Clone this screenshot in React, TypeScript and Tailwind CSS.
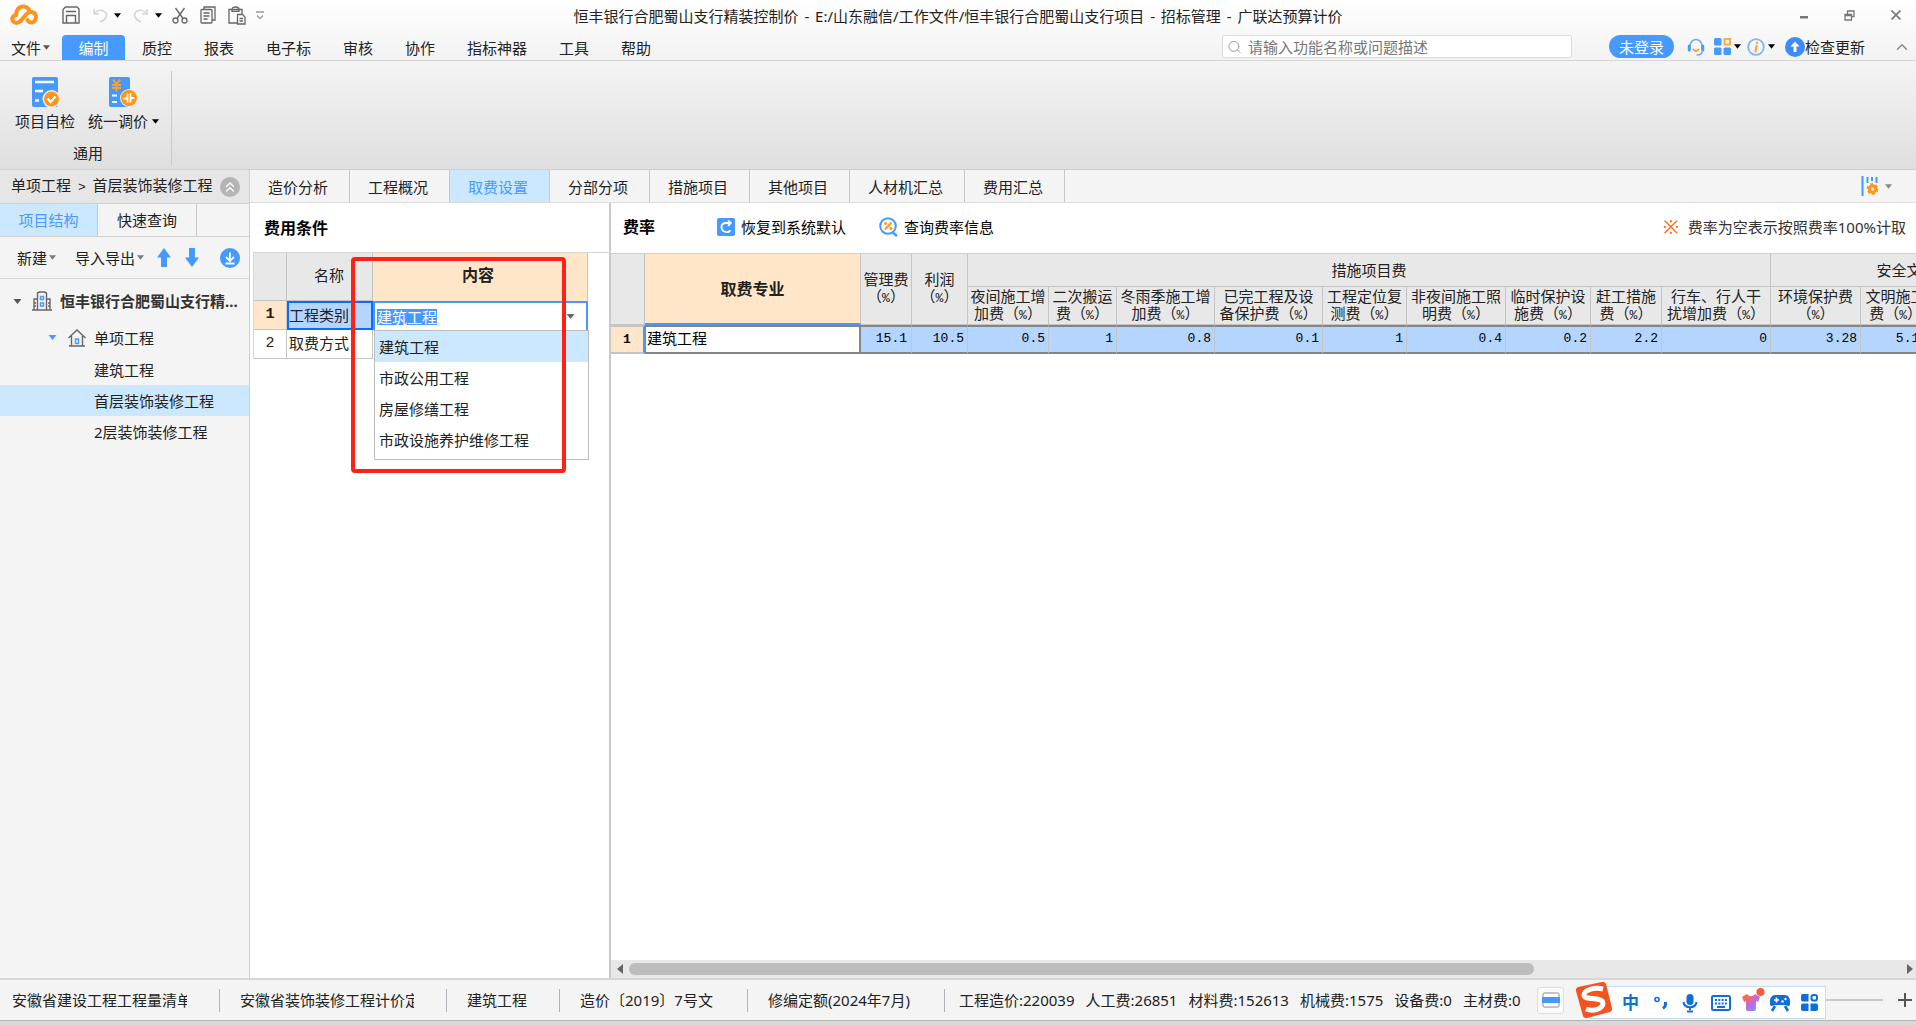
import React, { useEffect, useRef } from 'react';
import { ChevronUp, ChevronsUp, Search } from 'lucide-react';

const menus = ['质控', '报表', '电子标', '审核', '协作', '指标神器', '工具', '帮助'];

const mainTabs = ['造价分析', '工程概况', '取费设置', '分部分项', '措施项目', '其他项目', '人材机汇总', '费用汇总'];

const options = ['建筑工程', '市政公用工程', '房屋修缮工程', '市政设施养护维修工程'];

const measureCols = [
  { lines: ['夜间施工增', '加费'], value: '0.5' },
  { lines: ['二次搬运', '费'], value: '1' },
  { lines: ['冬雨季施工增', '加费'], value: '0.8' },
  { lines: ['已完工程及设', '备保护费'], value: '0.1' },
  { lines: ['工程定位复', '测费'], value: '1' },
  { lines: ['非夜间施工照', '明费'], value: '0.4' },
  { lines: ['临时保护设', '施费'], value: '0.2' },
  { lines: ['赶工措施', '费'], value: '2.2' },
  { lines: ['行车、行人干', '扰增加费'], value: '0' },
  { lines: ['环境保护费', ''], value: '3.28' },
  { lines: ['文明施工', '费'], value: '5.12' },
];

const totals = ['工程造价:220039', '人工费:26851', '材料费:152613', '机械费:1575', '设备费:0', '主材费:0'];

const Caret: React.FC<{ className?: string }> = ({ className = 'text-black' }) => (
  <svg viewBox="0 0 8 5" className={`h-[5px] w-[7px] shrink-0 ${className}`} fill="currentColor" aria-hidden="true">
    <path d="M0 0h8L4 5z" />
  </svg>
);

const Percent = () => (
  <>
    （<span className="font-['Liberation_Mono',monospace] text-[13px]">%</span>）
  </>
);

const Dash = () => <span className="mx-[2px]">-</span>;

const Logo = () => (
  <svg viewBox="0 0 28 22" className="h-[22px] w-7" fill="none" stroke="#ff9418" strokeWidth="4" strokeLinecap="round" strokeLinejoin="round">
    <path d="M10.500 17c-2 2.300-5.500 2.500-7.200.5-2-2.500-1-6 3-6.500C6 6 9 2.500 13 2.500c3 0 5.300 1.500 6.300 4" />
    <path d="M10.500 17 16.500 10c3-3.300 8.500-2.500 9.300 2 .6 4-2 7-5 6.500-1.800-.3-2.800-1.200-3.300-2.500" />
  </svg>
);

const TitleBar = () => (
  <div className="grid h-[30px] grid-cols-[1fr_auto_1fr] items-center">
    <div className="flex items-center pl-[10px] text-[#666]">
      <Logo />
      <button aria-label="保存" className="ml-6">
        <svg viewBox="0 0 18 18" className="h-[18px] w-[18px]" fill="none" stroke="currentColor" strokeWidth="1.400">
          <path d="M1 17V3.500L3.500 1H15l2 2v14zM4.500 17V9.500h9V17M4 5.500h10" />
        </svg>
      </button>
      <button aria-label="撤销" className="ml-3 text-[#d4d4d4]">
        <svg viewBox="0 0 16 16" className="h-4 w-4" fill="none" stroke="currentColor" strokeWidth="1.500">
          <path d="M2 2v5h5M2 7c3-4 8-5 11-2s1 8-5 10" />
        </svg>
      </button>
      <button aria-label="撤销列表" className="ml-[6px]"><Caret /></button>
      <button aria-label="恢复" className="ml-3 text-[#d4d4d4]">
        <svg viewBox="0 0 16 16" className="h-4 w-4" fill="none" stroke="currentColor" strokeWidth="1.500">
          <path d="M14 2v5H9M14 7C11 3 6 2 3 5s-1 8 5 10" />
        </svg>
      </button>
      <button aria-label="恢复列表" className="ml-[6px]"><Caret /></button>
      <button aria-label="剪切" className="ml-[10px]">
        <svg viewBox="0 0 16 17" className="h-[17px] w-4" fill="none" stroke="currentColor" strokeWidth="1.300">
          <circle cx="3.500" cy="13.500" r="2.500" />
          <circle cx="12.500" cy="13.500" r="2.500" />
          <path d="M5 11.500 12.500 1M11 11.500 3.500 1" />
        </svg>
      </button>
      <button aria-label="复制" className="ml-3">
        <svg viewBox="0 0 16 18" className="h-[18px] w-4" fill="none" stroke="currentColor" strokeWidth="1.300">
          <path d="M4 3.500V1h11v13h-3" />
          <rect x="1" y="3.500" width="11" height="13.500" rx="1" />
          <path d="M3.500 7h6M3.500 10h6M3.500 13h4" />
        </svg>
      </button>
      <button aria-label="粘贴" className="ml-3">
        <svg viewBox="0 0 18 19" className="h-[19px] w-[18px]" fill="none" stroke="currentColor" strokeWidth="1.300">
          <path d="M9 17H1V3.500h13V8M4 3.500C4 1.500 5.500 1 7.500 1S11 1.500 11 3.500v1.800H4z" />
          <path d="M9.500 8.500h5l2.500 2.500v7H9.500zM11.500 12.500h3.500M11.500 15h3.500" />
        </svg>
      </button>
      <button aria-label="自定义工具栏" className="ml-[10px] text-[#999]">
        <svg viewBox="0 0 8 9" className="h-[9px] w-2" fill="none" stroke="currentColor" strokeWidth="1.300">
          <path d="M0 1h8M1 4.500 4 7.500 7 4.500" />
        </svg>
      </button>
    </div>
    <h1 className="truncate pt-[2px] text-[15px]">
      恒丰银行合肥蜀山支行精装控制价 <Dash /> E:/山东融信/工作文件/恒丰银行合肥蜀山支行项目 <Dash /> 招标管理 <Dash /> 广联达预算计价
    </h1>
    <div className="flex items-center justify-end gap-9 pr-[15px] text-[#777]">
      <button aria-label="最小化">
        <svg viewBox="0 0 8 10" className="h-[10px] w-2" fill="currentColor"><path d="M0 6h8v2.500H0z" /></svg>
      </button>
      <button aria-label="还原">
        <svg viewBox="0 0 11 11" className="h-[11px] w-[11px]" fill="none" stroke="currentColor" strokeWidth="1.300">
          <path d="M1 4.500h6.500v5.500H1zM3.500 4.500V1H10v5.500H7.500M1 5.500h6.500" />
        </svg>
      </button>
      <button aria-label="关闭">
        <svg viewBox="0 0 10 10" className="h-[10px] w-[10px]" fill="none" stroke="currentColor" strokeWidth="1.600">
          <path d="m.5.5 9 9M9.500.5l-9 9" />
        </svg>
      </button>
    </div>
  </div>
);

const MenuBar = () => (
  <nav className="flex h-[31px] items-end border-b border-[#d6d6d6]">
    <div className="flex h-[25px] items-stretch">
      <button className="flex w-[62px] items-center gap-[2px] pl-[11px]">
        文件<Caret className="text-[#555]" />
      </button>
      <button className="mr-px w-[63px] rounded-t-[4px] bg-[#4599ff] text-white">编制</button>
      {menus.map((m) => (
        <button key={m} className="px-4">{m}</button>
      ))}
    </div>
    <div className="mb-[2px] ml-auto flex items-center pr-[5px]">
      <label className="flex h-[23px] w-[350px] items-center gap-[6px] rounded-[3px] border border-[#dcdcdc] bg-white pl-1">
        <Search className="h-4 w-4 text-[#999]" strokeWidth={1.5} />
        <input
          type="text"
          aria-label="搜索功能"
          placeholder="请输入功能名称或问题描述"
          className="w-full bg-transparent outline-none placeholder:text-[#777]"
        />
      </label>
      <button className="ml-[37px] h-[23px] w-[65px] rounded-full bg-[#4599ff] text-white">未登录</button>
      <button aria-label="客服" className="ml-[13px]">
        <svg viewBox="0 0 18 18" className="h-[18px] w-[18px]" fill="none" strokeLinecap="round">
          <path d="M3 8a6 6.500 0 0 1 12 0" stroke="#6db0ff" strokeWidth="1.600" />
          <path d="M2.300 8v4M15.700 8v4" stroke="#4599ff" strokeWidth="3" />
          <path d="M15.500 13c-.5 2.500-2.500 4-5.500 4" stroke="#6db0ff" strokeWidth="1.400" />
          <path d="M6.500 11.500c1.500 2 3.500 2 5 0" stroke="#ff9f2e" strokeWidth="2" />
        </svg>
      </button>
      <button className="ml-[9px] flex items-center gap-[3px]" aria-label="应用">
        <svg viewBox="0 0 17 17" className="h-[17px] w-[17px]">
          <rect x="0" y="0" width="7.500" height="7.500" rx="1.500" fill="#4599ff" />
          <rect x="0" y="9.500" width="7.500" height="7.500" rx="1.500" fill="#4599ff" />
          <rect x="9.500" y="9.500" width="7.500" height="7.500" rx="1.500" fill="#4599ff" />
          <rect x="10.500" y="1" width="5.500" height="5.500" fill="none" stroke="#ffab45" strokeWidth="2" />
        </svg>
        <Caret />
      </button>
      <button className="ml-[6px] flex items-center gap-[3px]" aria-label="关于">
        <svg viewBox="0 0 18 18" className="h-[18px] w-[18px]" fill="none">
          <circle cx="9" cy="9" r="7.800" stroke="#7cb8ff" strokeWidth="1.800" />
          <path d="M9.500 8 8.500 13.500M10 4.500l-.1.800" stroke="#ff9f2e" strokeWidth="2" strokeLinecap="round" />
        </svg>
        <Caret />
      </button>
      <button className="ml-[10px] flex items-center">
        <svg viewBox="0 0 20 20" className="h-5 w-5">
          <circle cx="10" cy="10" r="10" fill="#3d8bff" />
          <path d="M10 4.500 5.500 9.500h3V15h3V9.500h3z" fill="#fff" />
        </svg>
        检查更新
      </button>
      <button aria-label="收起功能区" className="ml-[28px]">
        <ChevronUp className="h-[18px] w-[18px] text-[#8a8a8a]" />
      </button>
    </div>
  </nav>
);

const Ribbon = () => (
  <section className="flex h-[108px] items-start bg-linear-to-b from-[#f4f4f4] to-[#dfdfdf] pt-[10px]">
    <div className="flex h-[94px] w-[172px] flex-col items-center border-r border-[#c9c9c9]">
      <div className="flex w-full pt-[6px]">
        <button className="ml-[15px] flex flex-col gap-[3px]">
          <svg viewBox="0 0 28 31" className="ml-[17px] h-[31px] w-7">
            <rect width="26" height="30" rx="2" fill="#4599ff" />
            <path d="M3 5h19M3 14h8M3 23.500h4" stroke="#fff" strokeWidth="2.500" />
            <circle cx="19.500" cy="22" r="9" fill="#e9f1fb" />
            <circle cx="19.500" cy="22" r="7.500" fill="#ff9418" />
            <path d="m15.500 21.500 3 3.500 5-5.500" fill="none" stroke="#fff" strokeWidth="2.400" />
          </svg>
          <span className="leading-5">项目自检</span>
        </button>
        <button className="ml-[13px] flex flex-col gap-[3px]">
          <svg viewBox="0 0 29 31" className="ml-[21px] h-[31px] w-[29px]">
            <rect width="21" height="30" rx="2" fill="#4599ff" />
            <path d="m4 2.500 3.500 4.500L11 2.500M3 8h9M3 11h9M7.500 7v7.500" fill="none" stroke="#ff9f2e" strokeWidth="2" />
            <path d="M3 18.500h5M3 25h5" stroke="#fff" strokeWidth="2" />
            <circle cx="20" cy="21" r="9" fill="#e9f1fb" />
            <circle cx="20" cy="21" r="8" fill="#ff9418" />
            <path d="M14.500 21.500h4V17M18.500 16.500V26M21.500 16v9.500M21.500 21h4" fill="none" stroke="#fff" strokeWidth="1.800" />
          </svg>
          <span className="flex items-center gap-1 leading-5">统一调价<Caret /></span>
        </button>
      </div>
      <span className="mt-3 pl-[5px]">通用</span>
    </div>
  </section>
);

const Sidebar = () => (
  <aside className="flex w-[250px] shrink-0 flex-col border-r border-[#d0d0d0] bg-[#f4f4f4]">
    <div className="flex h-[33px] items-center justify-between bg-[#e6e6e6] pr-[9px] pl-[11px]">
      <span>
        单项工程 <span className="mx-[3px] font-['Liberation_Mono',monospace] text-[13px]">&gt;</span> 首层装饰装修工程
      </span>
      <button aria-label="折叠" className="flex h-5 w-5 items-center justify-center rounded-full bg-[#b5b5b5] text-white">
        <ChevronsUp className="h-4 w-4" />
      </button>
    </div>
    <div className="flex h-[34px] border-y border-[#d0d0d0]">
      <button className="w-[98px] border-r border-[#c8c8c8] bg-[#cce8ff] text-[#4599ff]">项目结构</button>
      <button className="w-[99px] border-r border-[#c8c8c8]">快速查询</button>
    </div>
    <div className="flex h-[42px] items-center border-b border-[#d6d6d6] pl-[17px]">
      <button className="flex items-center gap-[2px]">新建<Caret className="text-[#777]" /></button>
      <button className="ml-[19px] flex items-center gap-[2px]">导入导出<Caret className="text-[#777]" /></button>
      <button aria-label="上移" className="ml-[13px]">
        <svg viewBox="0 0 14 19" className="h-[19px] w-[14px]" fill="#4599ff"><path d="M7 0 0 9.500h4V19h6V9.500h4z" /></svg>
      </button>
      <button aria-label="下移" className="ml-[14px]">
        <svg viewBox="0 0 14 19" className="h-[19px] w-[14px]" fill="#4599ff"><path d="M7 19 0 9.500h4V0h6v9.500h4z" /></svg>
      </button>
      <button aria-label="下载" className="ml-[21px]">
        <svg viewBox="0 0 20 20" className="h-5 w-5" fill="none" stroke="#fff" strokeWidth="1.800">
          <circle cx="10" cy="10" r="10" fill="#4599ff" stroke="none" />
          <path d="M10 4.500v8M6 9l4 4 4-4M5.500 15.500h9" />
        </svg>
      </button>
    </div>
    <ul className="pt-[3px]">
      <li className="flex h-[38px] items-center pl-[13px] font-bold text-[#333]">
        <Caret className="w-[9px] text-[#555]" />
        <svg viewBox="0 0 20 20" className="mr-2 ml-[10px] h-5 w-5 shrink-0" fill="none" stroke="#666" strokeWidth="1.400">
          <path d="M5.500 19V2l2-1h5l2 1v17M5.500 8H2v11M14.500 8H18v11M0 19h20M2 12h2M2 15h2M16 12h2M16 15h2" />
          <path d="M8.500 5.500h3v3h-3zM8.500 12h3v3h-3z" stroke="#4599ff" />
        </svg>
        <span className="whitespace-nowrap">恒丰银行合肥蜀山支行精...</span>
      </li>
      <li className="flex h-[35px] items-center pl-[48px]">
        <Caret className="w-[9px] text-[#4599ff]" />
        <svg viewBox="0 0 18 18" className="mr-2 ml-[11px] h-[18px] w-[18px]" fill="none" stroke="#666" strokeWidth="1.400">
          <path d="M.5 9 9 1l8.500 8M3.500 7v10h11V7M1 17h16" />
          <path d="M7.500 10h3v4.500h-3z" stroke="#4599ff" />
        </svg>
        单项工程
      </li>
      <li className="flex h-[30px] items-center pl-[94px]">建筑工程</li>
      <li className="flex h-[31px] items-center bg-[#cce8ff] pl-[94px]">首层装饰装修工程</li>
      <li className="flex h-[31px] items-center pl-[94px]">2层装饰装修工程</li>
    </ul>
  </aside>
);

const ConditionPanel = () => {
  const inputRef = useRef<HTMLInputElement>(null);

  useEffect(() => {
    inputRef.current?.focus();
    inputRef.current?.select();
  }, []);

  return (
    <section className="w-[361px] shrink-0 border-r-2 border-[#cacaca] bg-white pl-[3px]">
      <h2 className="flex h-[49px] items-center pl-[11px] text-base font-bold text-black">费用条件</h2>
      <div className="relative border-t border-l border-[#d6d6d6]">
        <table className="w-[334px] table-fixed border-separate border-spacing-0">
          <thead>
            <tr className="h-[48px] bg-[#e8e8e8]">
              <th className="w-[33px] border-r border-b border-[#c4c4c4]" />
              <th className="w-[86px] border-r border-b border-[#c4c4c4] pr-7 pb-1 text-right font-normal">名称</th>
              <th className="border-r border-[#c4c4c4] bg-[#ffe6c8] pr-1 pb-1 text-base font-bold">内容</th>
            </tr>
          </thead>
          <tbody>
            <tr className="h-[29px]">
              <th className="border-r border-b border-[#c4c4c4] bg-[#ffe6c8] font-['Liberation_Mono',monospace]">1</th>
              <td className="border-2 border-[#0a6cff] bg-[#b4d5ff] pb-[2px]">工程类别</td>
              <td className="relative border-2 border-b-0 border-[#4599ff]">
                <div className="flex items-center">
                  <input
                    ref={inputRef}
                    aria-label="工程类别"
                    defaultValue="建筑工程"
                    className="w-full pl-[2px] leading-4 outline-none selection:bg-[#4599ff] selection:text-white"
                  />
                  <button aria-label="展开" className="pr-[11px] pl-3"><Caret className="w-[9px] text-[#666]" /></button>
                </div>
                <ul className="absolute top-[27px] -left-px z-10 h-[130px] w-[215px] border border-[#bdbdbd] bg-white">
                  {options.map((o, i) => (
                    <li key={o} className={`flex h-[31px] items-center pl-1 ${i === 0 ? 'bg-[#cce8ff]' : ''}`}>{o}</li>
                  ))}
                </ul>
              </td>
            </tr>
            <tr className="h-[29px]">
              <th className="border-r border-b border-[#c4c4c4] font-['Liberation_Mono',monospace] font-normal">2</th>
              <td className="border-r border-b border-[#c4c4c4] pb-[2px] pl-[2px]">取费方式</td>
              <td />
            </tr>
          </tbody>
        </table>
        <div className="pointer-events-none absolute top-[4px] left-[97px] z-20 h-[216px] w-[215px] rounded-[4px] border-4 border-[#ff2116]" />
      </div>
    </section>
  );
};

const RatePanel = () => (
  <section className="flex min-w-0 flex-1 flex-col bg-white">
    <div className="flex h-[50px] items-center pb-[2px] pl-3 text-black">
      <h2 className="text-base font-bold">费率</h2>
      <button className="ml-[62px] flex items-center gap-[6px]">
        <svg viewBox="0 0 18 18" className="h-[18px] w-[18px]" fill="none" stroke="#fff" strokeWidth="1.800">
          <rect width="18" height="18" rx="2" fill="#4599ff" stroke="none" />
          <path d="M13.500 12.500c-3 3-9 1.500-9-3.500 0-3 2-4 4.500-4h5M11 2.500 13.700 5 11 7.800" />
        </svg>
        恢复到系统默认
      </button>
      <button className="ml-[33px] flex items-center gap-[6px]">
        <svg viewBox="0 0 19 20" className="h-5 w-[19px]" fill="none">
          <circle cx="9" cy="9" r="7.800" stroke="#4599ff" strokeWidth="2" />
          <path d="m13 15 5 4" stroke="#4599ff" strokeWidth="2.400" />
          <path d="m6 12.500 6.500-7" stroke="#ff9418" strokeWidth="2" />
          <circle cx="6.500" cy="6.500" r="1.500" fill="#ff9418" />
          <circle cx="12" cy="11.500" r="1.500" fill="#ff9418" />
        </svg>
        查询费率信息
      </button>
      <p className="mr-[10px] ml-auto flex items-center gap-[9px] text-[#333]">
        <span className="text-[19px] text-[#ff6a1a]">※</span>
        费率为空表示按照费率100%计取
      </p>
    </div>
    <div className="overflow-hidden border-t border-[#d0d0d0]">
      <table className="w-[1477px] table-fixed border-separate border-spacing-0 leading-[17px]">
        <colgroup>
          <col className="w-[34px]" />
          <col className="w-[216px]" />
          <col className="w-[51px]" />
          <col className="w-[56px]" />
          <col className="w-[81px]" />
          <col className="w-[68px]" />
          <col className="w-[98px]" />
          <col className="w-[108px]" />
          <col className="w-[84px]" />
          <col className="w-[99px]" />
          <col className="w-[85px]" />
          <col className="w-[71px]" />
          <col className="w-[109px]" />
          <col className="w-[90px]" />
          <col className="w-[70px]" />
          <col className="w-[157px]" />
        </colgroup>
        <thead className="bg-[#e8e8e8] *:*:border-r *:*:border-b *:*:border-[#c4c4c4] *:*:p-0 *:*:font-normal">
          <tr className="h-[33px]">
            <th rowSpan={2} />
            <th rowSpan={2} className="border-b-2! border-b-[#4599ff]! bg-[#ffe6c8] text-base font-bold!">取费专业</th>
            <th rowSpan={2}>管理费<br /><Percent /></th>
            <th rowSpan={2}>利润<br /><Percent /></th>
            <th colSpan={9}>措施项目费</th>
            <th colSpan={3}>安全文明施工费</th>
          </tr>
          <tr className="h-[38px]">
            {measureCols.map(({ lines }) => (
              <th key={lines[0]} className="whitespace-nowrap">{lines[0]}<br />{lines[1]}<Percent /></th>
            ))}
            <th />
          </tr>
        </thead>
        <tbody>
          <tr className="h-[29px] bg-[#b4d5ff] font-['Liberation_Mono',monospace] text-[13px] text-black *:border-y-2 *:border-y-[#858585] *:pt-0 *:pb-[3px]">
            <th className="border-r-2 border-r-[#4599ff] border-y-[#c4c4c4]! bg-[#ffe6c8] pb-0!">1</th>
            <td className="border-r-2 border-l border-[#858585] bg-white pl-px font-['Noto_Sans','Noto_Sans_CJK_SC',sans-serif] text-[15px]">建筑工程</td>
            <td className="border-r border-r-[#c4c4c4] pr-1 text-right">15.1</td>
            <td className="border-r border-r-[#c4c4c4] pr-[3px] text-right">10.5</td>
            {measureCols.map(({ lines, value }) => (
              <td key={lines[0]} className="border-r border-r-[#c4c4c4] pr-[3px] text-right">{value}</td>
            ))}
            <td />
          </tr>
        </tbody>
      </table>
    </div>
    <div className="mt-auto flex h-[18px] items-center bg-[#e8e8e8]">
      <button aria-label="向左滚动" className="flex w-[18px] justify-center">
        <svg viewBox="0 0 6 10" className="h-[10px] w-[6px]" fill="#666"><path d="M6 0v10L0 5z" /></svg>
      </button>
      <div className="flex-1">
        <div className="h-3 w-[71%] rounded-full bg-[#bdbdbd]" />
      </div>
      <button aria-label="向右滚动" className="flex w-3 justify-center">
        <svg viewBox="0 0 6 10" className="h-[10px] w-[6px]" fill="#666"><path d="M0 0v10l6-5z" /></svg>
      </button>
    </div>
  </section>
);

const Divider = () => <span className="h-[23px] w-px shrink-0 bg-[#b0b4ba]" />;

const ImeBar = () => (
  <div className="absolute right-[90px] bottom-[1px] z-10 flex h-[33px] w-[236px] items-center border border-[#c8daf0] bg-white pl-[31px] text-[#0d6fd8]">
    <svg viewBox="0 0 40 38" className="absolute -top-[6px] -left-[17px] h-[38px] w-10">
      <path d="M4 6 28 1q3-.6 4 2l6 24q.6 3-2 4L13 37q-3 .6-4-2L2 10q-.6-3 2-4z" fill="#f4531f" />
      <path d="M29 8C20 6 10 9 10 14c0 6 18 1 19 8 0 6-10 9-17 6" fill="none" stroke="#fff" strokeWidth="5" />
    </svg>
    <button className="text-[17px] font-bold">中</button>
    <svg viewBox="0 0 14 14" className="ml-[15px] h-[14px] w-[14px]" fill="none" stroke="currentColor">
      <circle cx="3" cy="3.500" r="2" strokeWidth="1.600" />
      <path d="M11.500 6v2.500c0 2-1 3-2.500 4" strokeWidth="3" />
    </svg>
    <svg viewBox="0 0 16 20" className="ml-[14px] h-5 w-4" fill="none" stroke="currentColor" strokeWidth="2">
      <rect x="4.500" y="1" width="7" height="11" rx="3.500" fill="currentColor" stroke="none" />
      <path d="M1.500 9c1 7 12 7 13 0M8 14v3M5 18.500h6" />
    </svg>
    <svg viewBox="0 0 20 16" className="ml-[13px] h-4 w-5" fill="none" stroke="currentColor">
      <rect x="1" y="1" width="18" height="14" rx="1.500" strokeWidth="2" />
      <path d="M4 5h12M4 8.500h12" strokeWidth="2" strokeDasharray="2 1.300" />
      <path d="M6 12h8" strokeWidth="2" />
    </svg>
    <svg viewBox="0 0 24 24" className="mb-[6px] ml-[10px] h-6 w-6">
      <defs>
        <linearGradient id="shirt" x1="0" y1="0" x2="1" y2="1">
          <stop offset="0.200" stopColor="#ff6a4a" />
          <stop offset="0.600" stopColor="#b46bff" />
          <stop offset="1" stopColor="#4fb4ff" />
        </linearGradient>
      </defs>
      <path d="M1 9l5-3c2 3 6 3 8 0l5 3-2 5-2-1v8c0 1-1 2-2 2H7c-1 0-2-1-2-2v-8l-2 1z" fill="url(#shirt)" />
      <circle cx="19.500" cy="4" r="4" fill="#ff5a36" />
    </svg>
    <svg viewBox="0 0 20 18" className="ml-[5px] h-[18px] w-5">
      <path d="M5 1h10c3 0 5 3 5 6v3c0 2-2 3-4 1H4c-2 2-4 1-4-1V7c0-3 2-6 5-6z" fill="currentColor" />
      <path d="M6.500 3.500v5M4 6h5" stroke="#fff" strokeWidth="1.600" />
      <circle cx="12.500" cy="7.500" r="1.200" fill="#fff" />
      <circle cx="15.500" cy="5" r="1.200" fill="#fff" />
      <path d="M5 12l-3 5M15 12l3 5" stroke="currentColor" strokeWidth="2.600" />
    </svg>
    <svg viewBox="0 0 17 17" className="ml-[11px] h-[17px] w-[17px]" fill="currentColor">
      <path d="M2 0h5.500v7.500H2a2 2 0 0 1-2-2V2a2 2 0 0 1 2-2zM2 9.500h5.500V17H2a2 2 0 0 1-2-2v-3.500a2 2 0 0 1 2-2zM9.500 9.500H15a2 2 0 0 1 2 2V15a2 2 0 0 1-2 2H9.500z" />
      <rect x="10.500" y="1" width="5.500" height="5.500" rx="2" fill="none" stroke="currentColor" strokeWidth="2" />
    </svg>
  </div>
);

const StatusBar = () => (
  <footer className="relative flex h-[41px] shrink-0 items-center overflow-hidden border-b border-[#b4b4b4] bg-[#f4f4f4] pl-3 whitespace-nowrap">
    <span className="w-[175px] shrink-0 overflow-hidden">安徽省建设工程工程量清单</span>
    <span className="mr-5 ml-8 flex"><Divider /></span>
    <span className="w-[174px] shrink-0 overflow-hidden">安徽省装饰装修工程计价定额</span>
    <span className="mr-5 ml-8 flex"><Divider /></span>
    <span>建筑工程</span>
    <span className="mr-5 ml-8 flex"><Divider /></span>
    <span className="w-[135px]">造价〔2019〕7号文</span>
    <span className="mr-5 ml-8 flex"><Divider /></span>
    <span className="w-[144px]">修编定额(2024年7月)</span>
    <span className="mr-[14px] ml-8 flex"><Divider /></span>
    <div className="flex gap-[11px]">
      {totals.map((t) => (
        <span key={t}>{t}</span>
      ))}
    </div>
    <button aria-label="视图" className="ml-auto flex h-[27px] w-[27px] items-center justify-center rounded-[3px] border border-[#dedede] bg-[#fafafa]">
      <svg viewBox="0 0 18 16" className="h-4 w-[18px]">
        <rect x="1" y="1" width="16" height="14" rx="1.500" fill="#fff" stroke="#8c8c8c" />
        <path d="M0 5h18v6H0z" fill="#4599ff" />
      </svg>
    </button>
    <div className="mr-[15px] ml-[262px] h-[2px] w-[57px] bg-[#cacaca]" />
    <button aria-label="放大" className="mr-1">
      <svg viewBox="0 0 14 14" className="h-[14px] w-[14px]" stroke="#555" strokeWidth="2"><path d="M7 0v14M0 7h14" /></svg>
    </button>
    <ImeBar />
  </footer>
);

const App: React.FC = () => (
  <div className="flex min-h-screen flex-col overflow-hidden bg-[#f4f4f4] font-['Noto_Sans','Noto_Sans_CJK_SC',sans-serif] text-[15px] leading-5 text-[#222]">
    <header className="bg-linear-to-b from-white to-[#f2f2f2]">
      <TitleBar />
      <MenuBar />
    </header>
    <Ribbon />
    <div className="flex flex-1 border-y-2 border-t border-[#d6d6d6] border-t-[#cfcfcf]">
      <Sidebar />
      <main className="flex min-w-0 flex-1 flex-col">
        <div className="flex h-[33px] border-b border-[#dcdcdc]">
          {mainTabs.map((t) => (
            <button
              key={t}
              className={`border-r border-[#c8c8c8] pt-[2px] pr-[21px] pl-[18px] ${t === '取费设置' ? 'bg-[#cce8ff] text-[#4599ff]' : ''}`}
            >
              {t}
            </button>
          ))}
          <button aria-label="列设置" className="mr-6 ml-auto flex items-center gap-[6px]">
            <svg viewBox="0 0 18 20" className="h-5 w-[18px]" fill="none" stroke="#4599ff">
              <path d="M1.500 0v20" strokeWidth="2" />
              <path d="M6.500 1v6M11 1v4M15.500 1v6" strokeWidth="2" />
              <circle cx="11.500" cy="13" r="3.200" stroke="#ff9418" strokeWidth="3" />
              <circle cx="11.500" cy="13" r="5" stroke="#ff9418" strokeWidth="1.800" strokeDasharray="2.600 2.600" />
            </svg>
            <Caret className="text-[#888]" />
          </button>
        </div>
        <div className="flex flex-1">
          <ConditionPanel />
          <RatePanel />
        </div>
      </main>
    </div>
    <StatusBar />
    <div className="h-1 bg-[#d9d9d9]" />
  </div>
);

export default App;
